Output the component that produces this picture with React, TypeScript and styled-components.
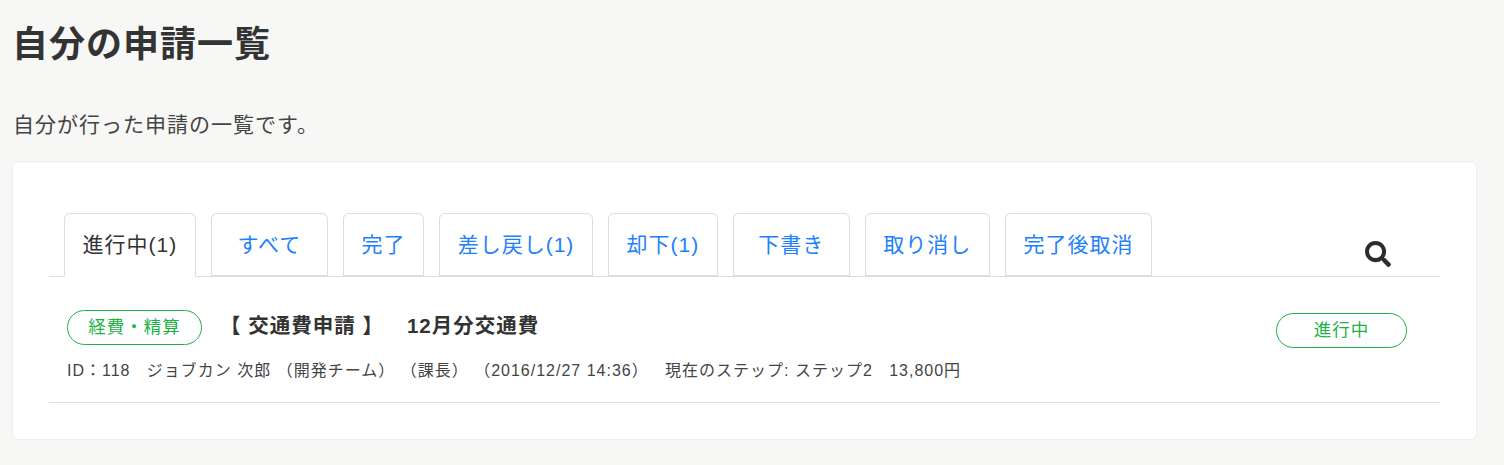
import { createGlobalStyle } from "styled-components";
import styled from "styled-components";
import { FaSearch } from "react-icons/fa";

const GlobalStyle = createGlobalStyle`
  html, body {
    margin: 0;
    padding: 0;
    background: #f7f7f5;
    color: #333;
    font-family: "Liberation Sans", "Noto Sans CJK JP", sans-serif;
    letter-spacing: 1px;
  }
`;

const Page = styled.div`
  height: 465px;
  padding: 0 27px 0 12px;
  box-sizing: border-box;
  overflow: hidden;
`;

const Title = styled.h1`
  margin: 0;
  padding: 22px 0 0;
  height: 46px;
  font-size: 36px;
  line-height: 46px;
  font-weight: 700;
  color: #333;
`;

const Lead = styled.p`
  margin: 0;
  padding: 42px 0 0 1px;
  height: 31px;
  font-size: 21px;
  line-height: 30px;
  color: #444;
`;

const Card = styled.section`
  margin-top: 20px;
  height: 279px;
  box-sizing: border-box;
  padding: 51px 36px 0;
  background: #fff;
  border: 1px solid #eee;
  border-radius: 6px;
`;

const TabBar = styled.div`
  position: relative;
  display: flex;
  gap: 15px;
  height: 63px;
  padding-left: 15px;
  border-bottom: 1px solid #ddd;
`;

const Tab = styled.a<{ $active?: boolean }>`
  display: block;
  min-width: 117px;
  height: 64px;
  box-sizing: border-box;
  padding: 0 17.6px;
  border: 1px solid #ddd;
  border-bottom: ${(p) => (p.$active ? "1px solid #fff" : "2px solid #ddd")};
  border-radius: 6px 6px 0 0;
  background: #fff;
  font-size: 21px;
  line-height: 61px;
  text-align: center;
  white-space: nowrap;
  color: ${(p) => (p.$active ? "#333" : "#1e80ff")};
`;

const ShortTab = styled(Tab)`
  min-width: 0;
`;

const SearchButton = styled.span`
  position: absolute;
  left: 1316px;
  top: 28px;
  display: flex;
  font-size: 26px;
  color: #2c2c2c;
`;

const Row = styled.div`
  display: flex;
  align-items: flex-start;
  justify-content: space-between;
  height: 126px;
  box-sizing: border-box;
  padding: 33px 33px 0 18px;
  border-bottom: 1px solid #ddd;
`;

const RowBody = styled.div`
  display: flex;
  flex-direction: column;
`;

const Heading = styled.div`
  display: flex;
  align-items: center;
  gap: 18px;
`;

const Pill = styled.span<{ $width: number }>`
  display: block;
  width: ${(p) => p.$width}px;
  height: 35px;
  box-sizing: border-box;
  border: 1px solid #1db247;
  border-radius: 18px;
  font-size: 17.5px;
  line-height: 33px;
  text-align: center;
  color: #1db247;
`;

const StatusPill = styled(Pill)`
  margin-top: 3px;
`;

const RowTitle = styled.span`
  display: flex;
  gap: 23px;
  font-size: 20.5px;
  line-height: 30px;
  font-weight: 700;
  color: #333;
  white-space: pre;
  position: relative;
  top: -2px;
`;

const Meta = styled.div`
  margin-top: 14px;
  font-size: 16px;
  line-height: 24px;
  color: #444;
  white-space: pre;
`;

export default function App() {
  const tabs = ["完了", "差し戻し(1)", "却下(1)"];
  return (
    <Page>
      <GlobalStyle />
      <Title>自分の申請一覧</Title>
      <Lead>自分が行った申請の一覧です。</Lead>
      <Card>
        <TabBar>
          <Tab $active>進行中(1)</Tab>
          <Tab>すべて</Tab>
          {tabs.map((t) => (
            <ShortTab key={t}>{t}</ShortTab>
          ))}
          <Tab>下書き</Tab>
          <Tab>取り消し</Tab>
          <Tab>完了後取消</Tab>
          <SearchButton>
            <FaSearch />
          </SearchButton>
        </TabBar>
        <Row>
          <RowBody>
            <Heading>
              <Pill $width={135}>経費・精算</Pill>
              <RowTitle>
                <span>【 交通費申請 】</span>
                <span>12月分交通費</span>
              </RowTitle>
            </Heading>
            <Meta>ID：118   ジョブカン 次郎 （開発チーム） （課長） （2016/12/27 14:36）   現在のステップ: ステップ2   13,800円</Meta>
          </RowBody>
          <StatusPill $width={131}>進行中</StatusPill>
        </Row>
      </Card>
    </Page>
  );
}
